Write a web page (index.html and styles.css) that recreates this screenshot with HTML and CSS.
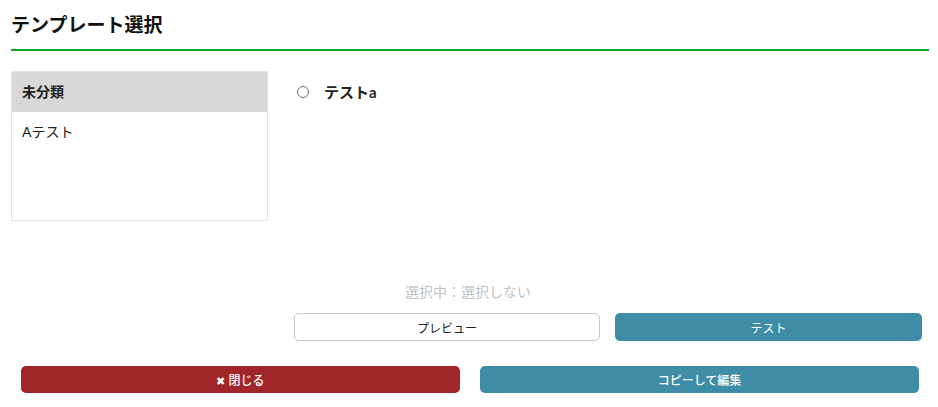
FILE: index.html
```html
<!DOCTYPE html>
<html lang="ja">
<head>
<meta charset="utf-8">
<title>テンプレート選択</title>
<link rel="stylesheet" href="styles.css">
</head>
<body>
<div class="page">
  <h1 class="title">テンプレート選択</h1>
  <div class="main">
    <div class="cats">
      <div class="cat cat-active">未分類</div>
      <div class="cat">Aテスト</div>
    </div>
    <div class="content">
      <label class="opt"><span class="radio"></span><span class="opt-label">テストa</span></label>
    </div>
  </div>
  <div class="status">選択中：選択しない</div>
  <div class="actions">
    <button class="btn btn-outline">プレビュー</button>
    <button class="btn btn-blue btn-test">テスト</button>
  </div>
  <div class="footer">
    <button class="btn btn-red"><span class="x">✖</span> 閉じる</button>
    <button class="btn btn-blue">コピーして編集</button>
  </div>
</div>
</body>
</html>
```
FILE: styles.css
```css
* { box-sizing: border-box; }
html, body { margin: 0; padding: 0; background: #fff; }
body {
  font-family: Lato, "Noto Sans CJK JP", "Noto Sans", sans-serif;
  color: #222;
}
.page {
  width: 938px;
  padding: 0 9px 0 11px;
}
.title {
  margin: 0;
  padding-top: 12px;
  height: 51px;
  font-size: 19px;
  font-weight: 700;
  line-height: 26px;
  color: #111;
  border-bottom: 2px solid #14a02a;
}
.main {
  display: flex;
  margin-top: 20px;
}
.cats {
  width: 257px;
  height: 150px;
  border: 1px solid #e4e4e4;
  flex: none;
}
.cat {
  height: 40px;
  padding: 0 10px;
  font-size: 14px;
  line-height: 40px;
  color: #222;
}
.cat-active {
  background: #d8d8d8;
  font-weight: 700;
}
.content {
  padding: 12px 0 0 29px;
}
.opt {
  display: flex;
  align-items: center;
  height: 17px;
}
.radio {
  width: 12px;
  height: 12px;
  border: 1px solid #767676;
  border-radius: 50%;
  margin-right: 15px;
}
.opt-label {
  font-size: 15px;
  font-weight: 700;
  color: #222;
}
.status {
  margin-top: 61px;
  padding-left: 394px;
  font-size: 14px;
  line-height: 20px;
  color: #c2c2c2;
}
.actions {
  display: flex;
  gap: 15px;
  margin-top: 11px;
  padding-left: 283px;
}
.actions .btn { flex: none; width: 306px; }
.actions .btn-test { width: 307px; }
.btn {
  flex: 1;
  height: 28px;
  border: none;
  border-radius: 5px;
  font-family: Lato, "Noto Sans CJK JP", sans-serif;
  font-size: 12px;
  cursor: pointer;
}
.btn-outline {
  background: #fff;
  border: 1px solid #c8c8c8;
  color: #222;
}
.btn-blue {
  background: #3f8ca7;
  color: #fff;
}
.btn-red {
  background: #a0262a;
  color: #fff;
}
.footer {
  display: flex;
  gap: 20px;
  margin-top: 25px;
  padding: 0 10px;
}
.footer .btn {
  height: 27px;
  font-weight: 500;
}
.x { font-size: 11px; }
```
